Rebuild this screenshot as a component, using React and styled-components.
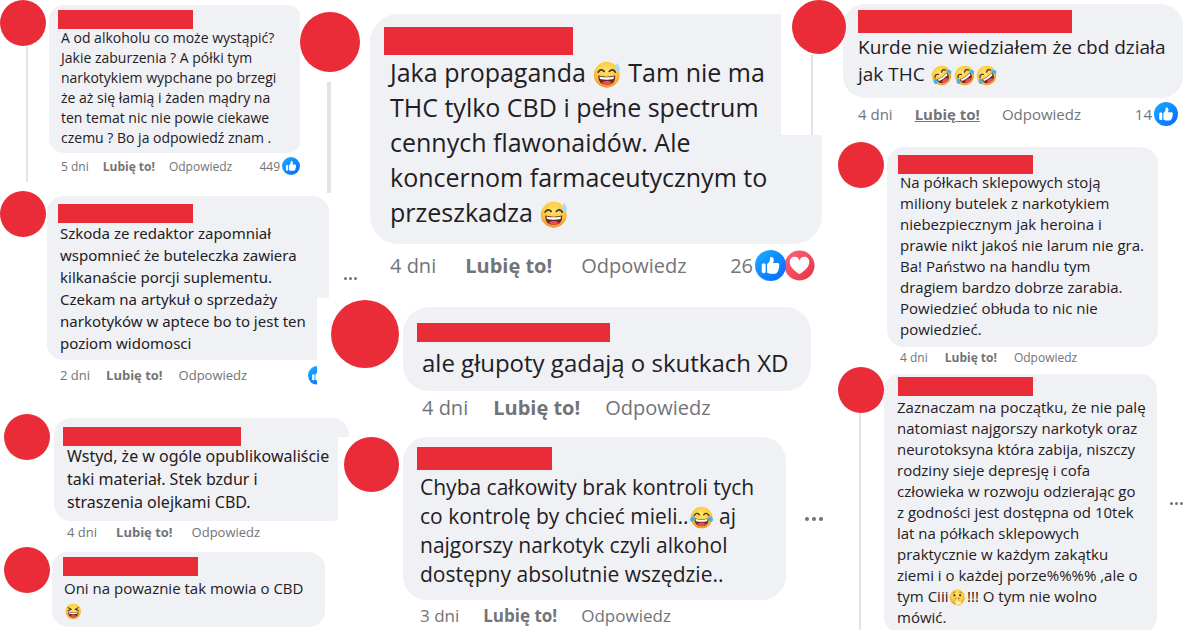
import React from 'react';
import styled, { createGlobalStyle, css } from 'styled-components';

const sweat = <Emoji kind="sweat" />;
const rofl = <Emoji kind="rofl" />;

const leftComments = [
    {
        bar: [135, 19], avatar: 46, gap: 3, top: 0, left: 0, right: -2, drop: 5,
        thread: { height: 136, width: 2, space: 0, shift: 8 }, cut: { width: 2, from: 0 },
        pad: [5, 9, 5], radius: 15, text: { size: 14, line: 20, left: 12, top: -1 },
        lines: [
            'A od alkoholu co może wystąpić?',
            'Jakie zaburzenia ? A półki tym',
            'narkotykiem wypchane po brzegi',
            'że aż się łamią i żaden mądry na',
            'ten temat nic nie powie ciekawe',
            'czemu ? Bo ja odpowiedź znam .',
        ],
        meta: { age: '5 dni', size: 12, top: 3, gap: 14, height: 20, count: '449', icons: ['like'], icon: 18, end: 2 },
    },
    {
        bar: [135, 19], avatar: 46, gap: 1, top: 9, left: 0, right: -57, drop: 5,
        cut: { width: 12, from: 102 },
        pad: [8, 11, 6], radius: 16, text: { size: 15, line: 22, left: 13, top: -1, font: 'Noto Sans' },
        lines: [
            'Szkoda ze redaktor zapomniał',
            'wspomnieć że buteleczka zawiera',
            'kilkanaście porcji suplementu.',
            'Czekam na artykuł o sprzedaży',
            'narkotyków w aptece bo to jest ten',
            'poziom widomosci',
        ],
        more: { dot: 3, space: 2, gap: 15 },
        meta: { age: '2 dni', size: 13, top: 5, gap: 16, height: 20, icons: ['like'], icon: 19, end: 30, iconCut: 10 },
    },
    {
        bar: [178, 19], avatar: 46, gap: 4, top: 29, left: 4, right: -49, drop: 4,
        cut: { width: 11, from: 19 },
        pad: [9, 9, 7], radius: 17, text: { size: 16, line: 23, left: 13, top: -1, font: 'Noto Sans' },
        lines: [
            'Wstyd, że w ogóle opublikowaliście',
            'taki materiał. Stek bzdur i',
            'straszenia olejkami CBD.',
        ],
        meta: { age: '4 dni', size: 13, top: 1, gap: 19, height: 20 },
    },
    {
        bar: [135, 19], avatar: 46, gap: 2, top: 5, left: 4, right: -25, drop: 5,
        pad: [5, 11, 6], radius: 16, text: { size: 15, line: 22, left: 12, top: 1 },
        lines: ['Oni na powaznie tak mowia o CBD', <Emoji kind="laugh" />],
    },
];

const middleComments = [
    {
        bar: [189, 28], avatar: 60, gap: 10, top: 12, left: 0, right: -30, drop: 2,
        thread: { height: 111, width: 4, space: 10, shift: -2 }, cut: { width: 41, until: 121 },
        pad: [13, 14, 14], radius: 28, text: { size: 25, line: 35, left: 20, top: 0 },
        lines: [
            <>Jaka propaganda {sweat} Tam nie ma</>,
            'THC tylko CBD i pełne spectrum',
            'cennych flawonaidów. Ale',
            'koncernom farmaceutycznym to',
            <>przeszkadza {sweat}</>,
        ],
        meta: { age: '4 dni', size: 20, top: 5, gap: 29, height: 32, count: '26', icons: ['like', 'love'], icon: 31, end: 7 },
    },
    {
        bar: [193, 19], avatar: 68, gap: 4, top: 19, left: 31, right: -19, drop: 7,
        pad: [16, 14, 11], radius: 26, text: { size: 24, line: 35, left: 19, top: 3 },
        lines: ['ale głupoty gadają o skutkach XD'],
        meta: { age: '4 dni', size: 20, top: 4, gap: 25, height: 24 },
    },
    {
        bar: [135, 23], avatar: 55, gap: 4, top: 18, left: 44, right: -31, drop: 0,
        pad: [10, 14, 11], radius: 24, text: { size: 21, line: 29, left: 17, top: 3 },
        lines: [
            'Chyba całkowity brak kontroli tych',
            <>co kontrolę by chcieć mieli..<Emoji kind="joy" /> aj</>,
            'najgorszy narkotyk czyli alkohol',
            'dostępny absolutnie wszędzie..',
        ],
        more: { dot: 4, space: 3, gap: 19 },
        meta: { age: '3 dni', size: 17, top: 5, gap: 24, height: 20 },
    },
];

const rightComments = [
    {
        bar: [214, 23], avatar: 54, gap: -3, top: 0, left: 0, right: 17, drop: 4,
        thread: { height: 80, width: 2, space: 1, shift: -14 },
        pad: [6, 15, 10], radius: 22, text: { size: 19, line: 27, left: 15, top: 1 },
        lines: ['Kurde nie wiedziałem że cbd działa', <>jak THC {rofl}{rofl}{rofl}</>],
        meta: { age: '4 dni', size: 15, top: 4, gap: 22, height: 24, underline: true, count: '14', icons: ['like'], icon: 24, end: 5 },
    },
    {
        bar: [135, 19], avatar: 46, gap: 3, top: 7, left: 46, right: 42, drop: 5,
        pad: [8, 11, 7], radius: 17, text: { size: 15, line: 21, left: 13, top: -2 },
        lines: [
            'Na półkach sklepowych stoją',
            'miliony butelek z narkotykiem',
            'niebezpiecznym jak heroina i',
            'prawie nikt jakoś nie larum nie gra.',
            'Ba! Państwo na handlu tym',
            'dragiem bardzo dobrze zarabia.',
            'Powiedzieć obłuda to nic nie',
            'powiedzieć.',
        ],
        meta: { age: '4 dni', size: 12, top: 0, gap: 17, height: 20 },
    },
    {
        bar: [135, 19], avatar: 46, gap: 0, top: 0, left: 46, right: 17, drop: 7,
        thread: { height: 220, width: 2, space: 0, shift: -2 },
        pad: [3, 14, 5], radius: 16, text: { size: 15, line: 21, left: 13, top: 1 },
        lines: [
            'Zaznaczam na początku, że nie palę',
            'natomiast najgorszy narkotyk oraz',
            'neurotoksyna która zabija, niszczy',
            'rodziny sieje depresję i cofa',
            'człowieka w rozwoju odzierając go',
            'z godności jest dostępna od 10tek',
            'lat na półkach sklepowych',
            'praktycznie w każdym zakątku',
            'ziemi i o każdej porze%%%% ,ale o',
            <>tym Ciii<Emoji kind="shush" />!!! O tym nie wolno</>,
            'mówić.',
        ],
        more: { dot: 3, space: 2, gap: 13 },
    },
];

export default function App() {
    return (
        <>
            <GlobalStyle />
            <Board>
                <Column>{leftComments.map((c, i) => <Comment key={i} {...c} />)}</Column>
                <Column>{middleComments.map((c, i) => <Comment key={i} {...c} />)}</Column>
                <Column>{rightComments.map((c, i) => <Comment key={i} {...c} />)}</Column>
            </Board>
        </>
    )
}

function Comment({ bar, avatar, gap, top, left, right, drop, thread, cut, pad, radius, text, lines, more, meta }) {
    return (
        <CommentRow $top={top} $left={left} $right={right}>
            <Side $gap={gap}>
                <Avatar $size={avatar} />
                {thread && <Thread $thread={thread} />}
            </Side>
            <Content $drop={drop}>
                <BubbleRow $gap={more ? more.gap : 0}>
                    <Bubble $pad={pad} $radius={radius} $cut={cut}>
                        <HiddenName $width={bar[0]} $height={bar[1]} $left={pad[1]} />
                        <Text $text={text}>
                            {lines.map((line, i) => <Line key={i}>{line}</Line>)}
                        </Text>
                    </Bubble>
                    {more && (
                        <MoreButton aria-label="Więcej" $dot={more.dot} $space={more.space}>
                            <i /><i /><i />
                        </MoreButton>
                    )}
                </BubbleRow>
                {meta && (
                    <Meta $meta={meta} $left={text.left}>
                        <span>{meta.age}</span>
                        <LikeButton $underline={meta.underline}>Lubię to!</LikeButton>
                        <MetaButton>Odpowiedz</MetaButton>
                        {meta.icons && (
                            <Reactions $cut={meta.iconCut}>
                                {meta.count && <Count>{meta.count}</Count>}
                                {meta.icons.map(name => <Reaction key={name} name={name} size={meta.icon} />)}
                            </Reactions>
                        )}
                    </Meta>
                )}
            </Content>
        </CommentRow>
    )
}

function Reaction({ name, size }) {
    if (name === 'love') {
        return (
            <LoveIcon width={size} height={size} viewBox="0 0 32 32">
                <defs>
                    <linearGradient id="love" x1="0" y1="0" x2="1" y2="1">
                        <stop offset="0" stopColor="#ff6680" />
                        <stop offset="1" stopColor="#e8303f" />
                    </linearGradient>
                </defs>
                <circle cx="16" cy="16" r="15.5" fill="url(#love)" />
                <path d="M16 25C10 21 6 17.5 6 13a5 5 0 0 1 10-2 5 5 0 0 1 10 2c0 4.5-4 8-10 12z" fill="#fff" />
            </LoveIcon>
        )
    }
    return (
        <LikeIcon width={size} height={size} viewBox="0 0 32 32">
            <defs>
                <linearGradient id="like" x1="0" y1="0" x2="1" y2="1">
                    <stop offset="0" stopColor="#18afff" />
                    <stop offset="1" stopColor="#0866ff" />
                </linearGradient>
            </defs>
            <circle cx="16" cy="16" r="16" fill="url(#like)" />
            <rect x="7" y="14" width="4" height="10" rx="1.5" fill="#fff" />
            <path d="M12.5 14.5c2.5-1.5 3-4 3-6 0-2 3.8-1.8 3.8 1.5 0 1.5-.4 2.5-.7 3.5H23c2.5 0 2.8 2.6 1.4 3.4 1 .9.8 2.5-.4 3 .6 1 .1 2.3-1.1 2.6.2 1.3-.9 2-2.4 2H17c-2 0-3-.5-4.5-1z" fill="#fff" />
        </LikeIcon>
    )
}

function Emoji({ kind }) {
    return (
        <EmojiIcon viewBox="0 0 32 32" role="img" aria-label={kind}>
            <defs>
                <radialGradient id="face" cx=".5" cy=".35" r=".65">
                    <stop offset="0" stopColor="#ffe36b" />
                    <stop offset=".65" stopColor="#fcc93c" />
                    <stop offset="1" stopColor="#f0912b" />
                </radialGradient>
            </defs>
            <g transform={kind === 'rofl' ? 'rotate(-35 16 16)' : undefined}>
                <circle cx="16" cy="16" r="15" fill="url(#face)" />
                {kind === 'shush' ? (
                    <>
                        <path d="M7 8q2-2.5 5-2M20 6q3-.5 5 2" fill="none" stroke="#9a5b1c" strokeWidth="1.5" />
                        <ellipse cx="10.5" cy="12" rx="1.8" ry="2.5" fill="#4a3522" />
                        <ellipse cx="21.5" cy="12" rx="1.8" ry="2.5" fill="#4a3522" />
                        <path d="M12 19q4-2 8 0" fill="none" stroke="#6a3a1c" strokeWidth="2" />
                        <path d="M14.5 16q1.5-2 3 0v7h5q4 1 2 4.5-3 4-8 4-4-.5-5-5z" fill="#fff0a8" stroke="#e79a35" />
                    </>
                ) : (
                    <>
                        <path
                            d={kind === 'laugh' ? 'M6 9l6 3-6 3M26 9l-6 3 6 3' : 'M6 13q3-5 7-1M19 12q4-4 7 1'}
                            fill="none" stroke="#4a3522" strokeWidth="2" strokeLinecap="round"
                        />
                        <path d="M6 17q10 2.5 20 0 0 11-10 11T6 17z" fill="#5f2a25" />
                        <path d="M7.5 18q8.5 2 17 0l-.7 3q-8 1.5-15.6 0z" fill="#fff" />
                        <path d="M10 25q6-4 12 0-2.5 3-6 3t-6-3z" fill="#f04a55" />
                    </>
                )}
                {(kind === 'joy' || kind === 'rofl') && (
                    <path d="M6 14q-6 1-6 5.5 1 3.5 4.5 2Q7 19 6 14zM26 14q6 1 6 5.5-1 3.5-4.5 2Q25 19 26 14z" fill="#43b2f5" />
                )}
            </g>
            {kind === 'sweat' && <path d="M28 2q4 6 3 8.5-1.5 2.5-4 1.5-2.5-2.5 1-10z" fill="#a5dcf8" />}
        </EmojiIcon>
    )
}

const GlobalStyle = createGlobalStyle`
    * {
        box-sizing: border-box;
    }

    body {
        margin: 0;
        background: #fff;
        font-family: "Open Sans", "Noto Sans", sans-serif;
    }
`

const Board = styled.main`
    display: grid;
    grid-template-columns: 300fr 492fr 408fr;
    height: 100vh;
    overflow: hidden;
`

const Column = styled.section`
    display: flex;
    flex-direction: column;
    min-width: 0;
`

const CommentRow = styled.article`
    display: flex;
    align-items: flex-start;
    margin: ${({ $top, $right, $left }) => `${$top}px ${$right}px 0 ${$left}px`};
`

const Side = styled.div`
    display: flex;
    flex-direction: column;
    align-items: center;
    flex-shrink: 0;
    z-index: 1;
    margin-right: ${(props) => props.$gap}px;
`

const Avatar = styled.div`
    width: ${(props) => props.$size}px;
    height: ${(props) => props.$size}px;
    border-radius: 50%;
    background: #e92c37;
`

const Thread = styled.div`
    width: ${(props) => props.$thread.width}px;
    height: ${(props) => props.$thread.height}px;
    margin-top: ${(props) => props.$thread.space}px;
    margin-left: ${(props) => props.$thread.shift}px;
    background: #e3e4e9;
`

const Content = styled.div`
    flex: 1;
    min-width: 0;
    padding-top: ${(props) => props.$drop}px;
`

const BubbleRow = styled.div`
    display: flex;
    align-items: center;
    gap: ${(props) => props.$gap}px;
`

// a strip of the right edge is hidden, above "until" or below "from"
const cutShape = ({ width, from, until }) => {
    const edge = `calc(100% - ${width}px)`;
    return until
        ? `0 0, ${edge} 0, ${edge} ${until}px, 100% ${until}px, 100% 100%, 0 100%`
        : `0 0, 100% 0, 100% ${from}px, ${edge} ${from}px, ${edge} 100%, 0 100%`;
}

const Bubble = styled.div`
    flex: 1;
    min-width: 0;
    padding: ${({ $pad }) => `${$pad[0]}px 0 ${$pad[2]}px`};
    border-radius: ${(props) => props.$radius}px;
    background: #f0f1f5;
    ${({ $cut }) => $cut && css`clip-path: polygon(${cutShape($cut)});`}
`

const HiddenName = styled.div`
    width: ${(props) => props.$width}px;
    height: ${(props) => props.$height}px;
    margin-left: ${(props) => props.$left}px;
    background: #e92c37;
`

const Text = styled.p`
    margin: ${({ $text }) => `${$text.top}px 0 0 ${$text.left}px`};
    font-family: ${({ $text }) => `"${$text.font || 'Open Sans'}", sans-serif`};
    font-size: ${(props) => props.$text.size}px;
    line-height: ${(props) => props.$text.line}px;
    color: #1f2023;
`

const Line = styled.span`
    display: block;
    white-space: nowrap;
`

const EmojiIcon = styled.svg`
    display: inline-block;
    width: 1.1em;
    height: 1.1em;
    margin: 0 1px;
    vertical-align: -0.25em;
`

const MoreButton = styled.button`
    display: flex;
    gap: ${(props) => props.$space}px;
    padding: 0;
    border: 0;
    background: none;

    i {
        width: ${(props) => props.$dot}px;
        height: ${(props) => props.$dot}px;
        border-radius: 50%;
        background: #6f7276;
    }
`

const Meta = styled.footer`
    display: flex;
    align-items: center;
    gap: ${(props) => props.$meta.gap}px;
    height: ${(props) => props.$meta.height}px;
    margin-top: ${(props) => props.$meta.top}px;
    padding: ${({ $left, $meta }) => `0 ${$meta.end || 0}px 0 ${$left}px`};
    font-size: ${(props) => props.$meta.size}px;
    font-weight: 500;
    white-space: nowrap;
    color: #727478;
`

const MetaButton = styled.button`
    padding: 0;
    border: 0;
    background: none;
    font: inherit;
    color: inherit;
`

const LikeButton = styled(MetaButton)`
    font-weight: 700;
    text-decoration: ${(props) => props.$underline ? 'underline' : 'none'};
`

const Reactions = styled.div`
    display: flex;
    align-items: center;
    margin-left: auto;
    ${({ $cut }) => $cut && css`clip-path: inset(0 ${$cut}px 0 0);`}
`

const Count = styled.span`
    margin-right: 2px;
    font-weight: 400;
`

const LikeIcon = styled.svg`
    z-index: 1;
`

const LoveIcon = styled.svg`
    margin-left: -2px;
`
